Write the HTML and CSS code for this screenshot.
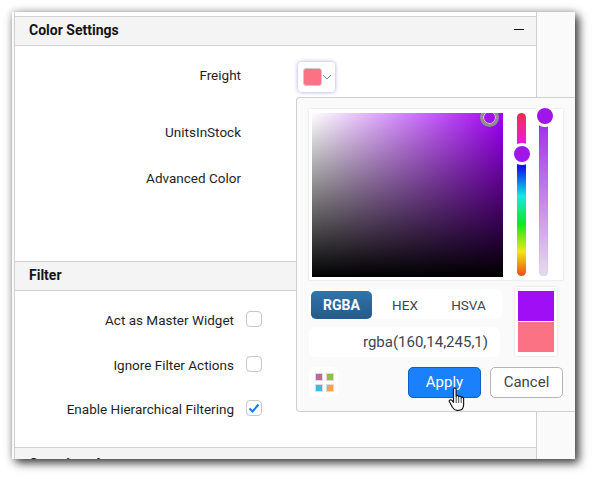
FILE: index.html
```html
<!DOCTYPE html>
<html lang="en">
<head>
    <meta charset="UTF-8">
    <meta name="viewport" content="width=device-width, initial-scale=1.0">
    <title>Color Settings</title>
    <link rel="stylesheet" href="styles.css">
</head>
<body>
    <div class="window">
        <div class="panel">
            <div class="section-header">
                <span>Color Settings</span>
                <span class="collapse"></span>
            </div>
            <div class="color-body">
                <div class="row row-freight">
                    <span class="label">Freight</span>
                    <div class="color-button">
                        <span class="color-swatch"></span>
                        <svg class="chevron" width="10" height="6" viewBox="0 0 10 6"><path d="M1 1l4 4 4-4" fill="none" stroke="#7d8a99" stroke-width="1"/></svg>
                    </div>
                </div>
                <div class="row row-units"><span class="label">UnitsInStock</span></div>
                <div class="row row-advanced"><span class="label">Advanced Color</span></div>
            </div>
            <div class="section-header">
                <span>Filter</span>
            </div>
            <div class="filter-body">
                <div class="row row-filter">
                    <span class="label label-filter">Act as Master Widget</span>
                    <span class="check"></span>
                </div>
                <div class="row row-filter">
                    <span class="label label-filter">Ignore Filter Actions</span>
                    <span class="check"></span>
                </div>
                <div class="row row-filter">
                    <span class="label label-filter">Enable Hierarchical Filtering</span>
                    <span class="check">
                        <svg width="14" height="14" viewBox="0 0 14 14"><path d="M2.5 7.5l3 3 6-7" fill="none" stroke="#1677ff" stroke-width="2"/></svg>
                    </span>
                </div>
            </div>
            <div class="section-header section-clipped">
                <span>Container Appearance</span>
            </div>
        </div>
        <div class="strip"></div>

        <div class="popup">
            <div class="picker">
                <div class="sv-area">
                    <span class="sv-handle"></span>
                </div>
                <div class="slider hue">
                    <span class="thumb thumb-hue"></span>
                </div>
                <div class="slider alpha">
                    <span class="thumb thumb-alpha"></span>
                </div>
            </div>
            <div class="value-area">
                <div class="value-left">
                    <div class="tabs">
                        <span class="tab tab-active">RGBA</span>
                        <span class="tab tab-hex">HEX</span>
                        <span class="tab">HSVA</span>
                    </div>
                    <div class="value-input">rgba(160,14,245,1)</div>
                </div>
                <div class="preview">
                    <span class="preview-new"></span>
                    <span class="preview-old"></span>
                </div>
            </div>
            <div class="popup-footer">
                <div class="palette-button">
                    <svg width="20" height="20" viewBox="0 0 20 20">
                        <rect x="1.500" y="1.500" width="7" height="7" fill="#c563a8" stroke="#ddd"/>
                        <rect x="12.500" y="1.500" width="7" height="7" fill="#8dc044" stroke="#ddd"/>
                        <rect x="1.500" y="12.500" width="7" height="7" fill="#3fbcd8" stroke="#ddd"/>
                        <rect x="12.500" y="12.500" width="7" height="7" fill="#f5a24a" stroke="#ddd"/>
                    </svg>
                </div>
                <button class="btn btn-apply">Apply</button>
                <button class="btn btn-cancel">Cancel</button>
            </div>
        </div>

        <svg class="hand" width="19" height="25" viewBox="0 0 19 25">
            <path d="M5.500 2.200c0-1.600 2.600-1.600 2.600 0v7.200c.2-1.400 2.500-1.400 2.600 0v.6c.2-1.300 2.400-1.300 2.500.1v.8c.3-1.100 2.300-1 2.400.3v6.500c0 3.300-2 5.600-5.200 5.600H9c-2.200 0-3.300-1-4.400-2.800L1.400 14.800c-.8-1.500 1.300-2.700 2.500-1.400l1.600 1.900z" fill="#fff" stroke="#1a1a1a" stroke-width="1.200" stroke-linejoin="round"/>
            <path d="M8.200 10v6M10.700 10.500V16M13.200 11v5" fill="none" stroke="#1a1a1a" stroke-width=".8"/>
        </svg>
    </div>
</body>
</html>
```

FILE: styles.css
```css
body {
    margin: 0;
    padding: 12px 20px 20px 12px;
    background: #fff;
    font-family: Roboto, "Liberation Sans", sans-serif;
    font-size: 13.5px;
    color: #1f1f1f;
    overflow: hidden;
}

.window {
    position: relative;
    display: flex;
    width: 563px;
    height: 447px;
    background: #fafafa;
    overflow: hidden;
    box-shadow: 4px 4px 9px rgba(0, 0, 0, 0.72), 0 0 8px rgba(0, 0, 0, 0.25);
}

.panel {
    width: 521px;
    margin-left: 2px;
    padding-top: 4px;
    background: #fff;
    border-left: 1px solid #cfcfcf;
    border-right: 1px solid #cfcfcf;
    flex: none;
}

.strip {
    flex: 1;
}

.section-header {
    display: flex;
    justify-content: space-between;
    align-items: center;
    height: 26px;
    padding: 0 12px 2px 14px;
    background: #f4f4f4;
    border-top: 1px solid #d2d2d2;
    border-bottom: 1px solid #d2d2d2;
    font-size: 14px;
    font-weight: 700;
    color: #141414;
}

.section-clipped {
    padding-top: 3px;
}

.collapse {
    width: 10px;
    height: 1px;
    background: #111;
    margin-bottom: 2px;
}

.color-body {
    box-sizing: border-box;
    height: 215px;
    padding-top: 7px;
}

.filter-body {
    box-sizing: border-box;
    height: 156px;
    padding-top: 7px;
}

.row {
    display: flex;
    align-items: center;
    height: 44px;
}

.row-units {
    margin-top: 13px;
}

.row-advanced {
    margin-top: 2px;
}

.row-filter {
    height: 44.5px;
}

.label {
    width: 226px;
    text-align: right;
    flex: none;
}

.label-filter {
    width: 219px;
}

.color-button {
    display: flex;
    align-items: center;
    box-sizing: border-box;
    width: 37px;
    height: 30px;
    margin-left: 57px;
    margin-top: 4px;
    padding-left: 5px;
    background: #fff;
    border-radius: 4px;
    box-shadow: 0 0 4px #a9a4e6;
}

.color-swatch {
    box-sizing: border-box;
    width: 19px;
    height: 18px;
    background: #fb7285;
    border: 1px solid #d6c8cc;
    border-radius: 3px;
}

.check {
    display: flex;
    align-items: center;
    justify-content: center;
    box-sizing: border-box;
    width: 16px;
    height: 16px;
    margin-left: 12px;
    margin-bottom: 2px;
    border: 1px solid #c8c8c8;
    border-radius: 4px;
    background: #fff;
}

.popup {
    position: absolute;
    left: 284px;
    top: 85px;
    box-sizing: border-box;
    width: 279px;
    height: 315px;
    padding: 11px 12px 0 12px;
    background: #fafafa;
    border: 1px solid #cfcfcf;
    border-right: none;
    border-radius: 4px 0 0 4px;
}

.picker {
    position: relative;
    display: flex;
    box-sizing: border-box;
    width: 254px;
    height: 171px;
    padding: 4px 0 3px 3px;
    background: #fff;
    box-shadow: 0 0 2px rgba(0, 0, 0, 0.15);
}

.sv-area {
    position: relative;
    width: 191px;
    height: 164px;
    background: linear-gradient(to top, #000, transparent),
        linear-gradient(to right, #fff, #a000f5);
    overflow: hidden;
}

.sv-handle {
    position: absolute;
    left: 168px;
    top: -5px;
    box-sizing: border-box;
    width: 19px;
    height: 19px;
    border: 3px solid #8f8f8f;
    border-radius: 50%;
    box-shadow: inset 0 0 0 1px #ddd;
}

.slider {
    position: relative;
    width: 9px;
    height: 163px;
    border-radius: 5px;
    flex: none;
}

.hue {
    margin-left: 14px;
    background: linear-gradient(to bottom, #ee2a4a 0%, #ee2a7a 6%, #f018d8 17%, #a00ef5 26%, #0a14f0 33%, #12e8e8 51%, #10e820 68%, #f0e810 85%, #f04a1a 100%);
}

.alpha {
    margin-left: 13px;
    background: linear-gradient(to bottom, #a024e8, #e6dcec);
    box-shadow: inset 0 0 1px rgba(0, 0, 0, 0.2);
}

.thumb {
    position: absolute;
    width: 16px;
    height: 16px;
    background: #a016ea;
    border: 3px solid #fff;
    border-radius: 50%;
}

.thumb-hue {
    left: -6px;
    top: 30px;
}

.thumb-alpha {
    left: -5px;
    top: -8px;
}

.value-area {
    display: flex;
    margin-top: 7px;
}

.value-left {
    width: 193px;
    padding-top: 2px;
}

.tabs {
    display: flex;
    align-items: center;
    box-sizing: border-box;
    height: 30px;
    padding: 2px 2px 0 2px;
    background: #fff;
    border-radius: 6px;
    color: #3a4652;
}

.tab {
    width: 61px;
    height: 28px;
    line-height: 28px;
    text-align: center;
    flex: none;
}

.tab-active {
    background: linear-gradient(to bottom, #2f76ac, #25598a);
    border-radius: 5px;
    color: #fff;
    font-size: 14px;
    font-weight: 700;
}

.tab-hex {
    width: 66px;
}

.value-input {
    box-sizing: border-box;
    width: 191px;
    height: 30px;
    margin-top: 8px;
    padding-right: 12px;
    background: #fff;
    border-radius: 6px;
    font-size: 15px;
    line-height: 30px;
    text-align: right;
    color: #3a4652;
}

.preview {
    display: flex;
    flex-direction: column;
    box-sizing: border-box;
    width: 42px;
    height: 69px;
    margin-left: 13px;
    padding: 4px 3px;
    background: #fff;
    box-shadow: 0 0 2px rgba(0, 0, 0, 0.15);
}

.preview-new {
    height: 30px;
    background: #a00ef5;
}

.preview-old {
    height: 30px;
    margin-top: 1px;
    background: #fb7285;
}

.popup-footer {
    display: flex;
    margin-top: 10px;
}

.palette-button {
    display: flex;
    align-items: center;
    justify-content: center;
    width: 29px;
    height: 30px;
    background: #fff;
    border-radius: 6px;
}

.btn {
    box-sizing: border-box;
    width: 73px;
    height: 31px;
    padding: 0 0 1px;
    border-radius: 5px;
    font-family: inherit;
    font-size: 15px;
}

.btn-apply {
    margin-left: 70px;
    background: #1a80fb;
    border: 1px solid #0f5fc4;
    color: #fff;
}

.btn-cancel {
    margin-left: 9px;
    background: #fff;
    border: 1px solid #b5b5b5;
    color: #444;
}

.hand {
    position: absolute;
    left: 436px;
    top: 375px;
}
```
